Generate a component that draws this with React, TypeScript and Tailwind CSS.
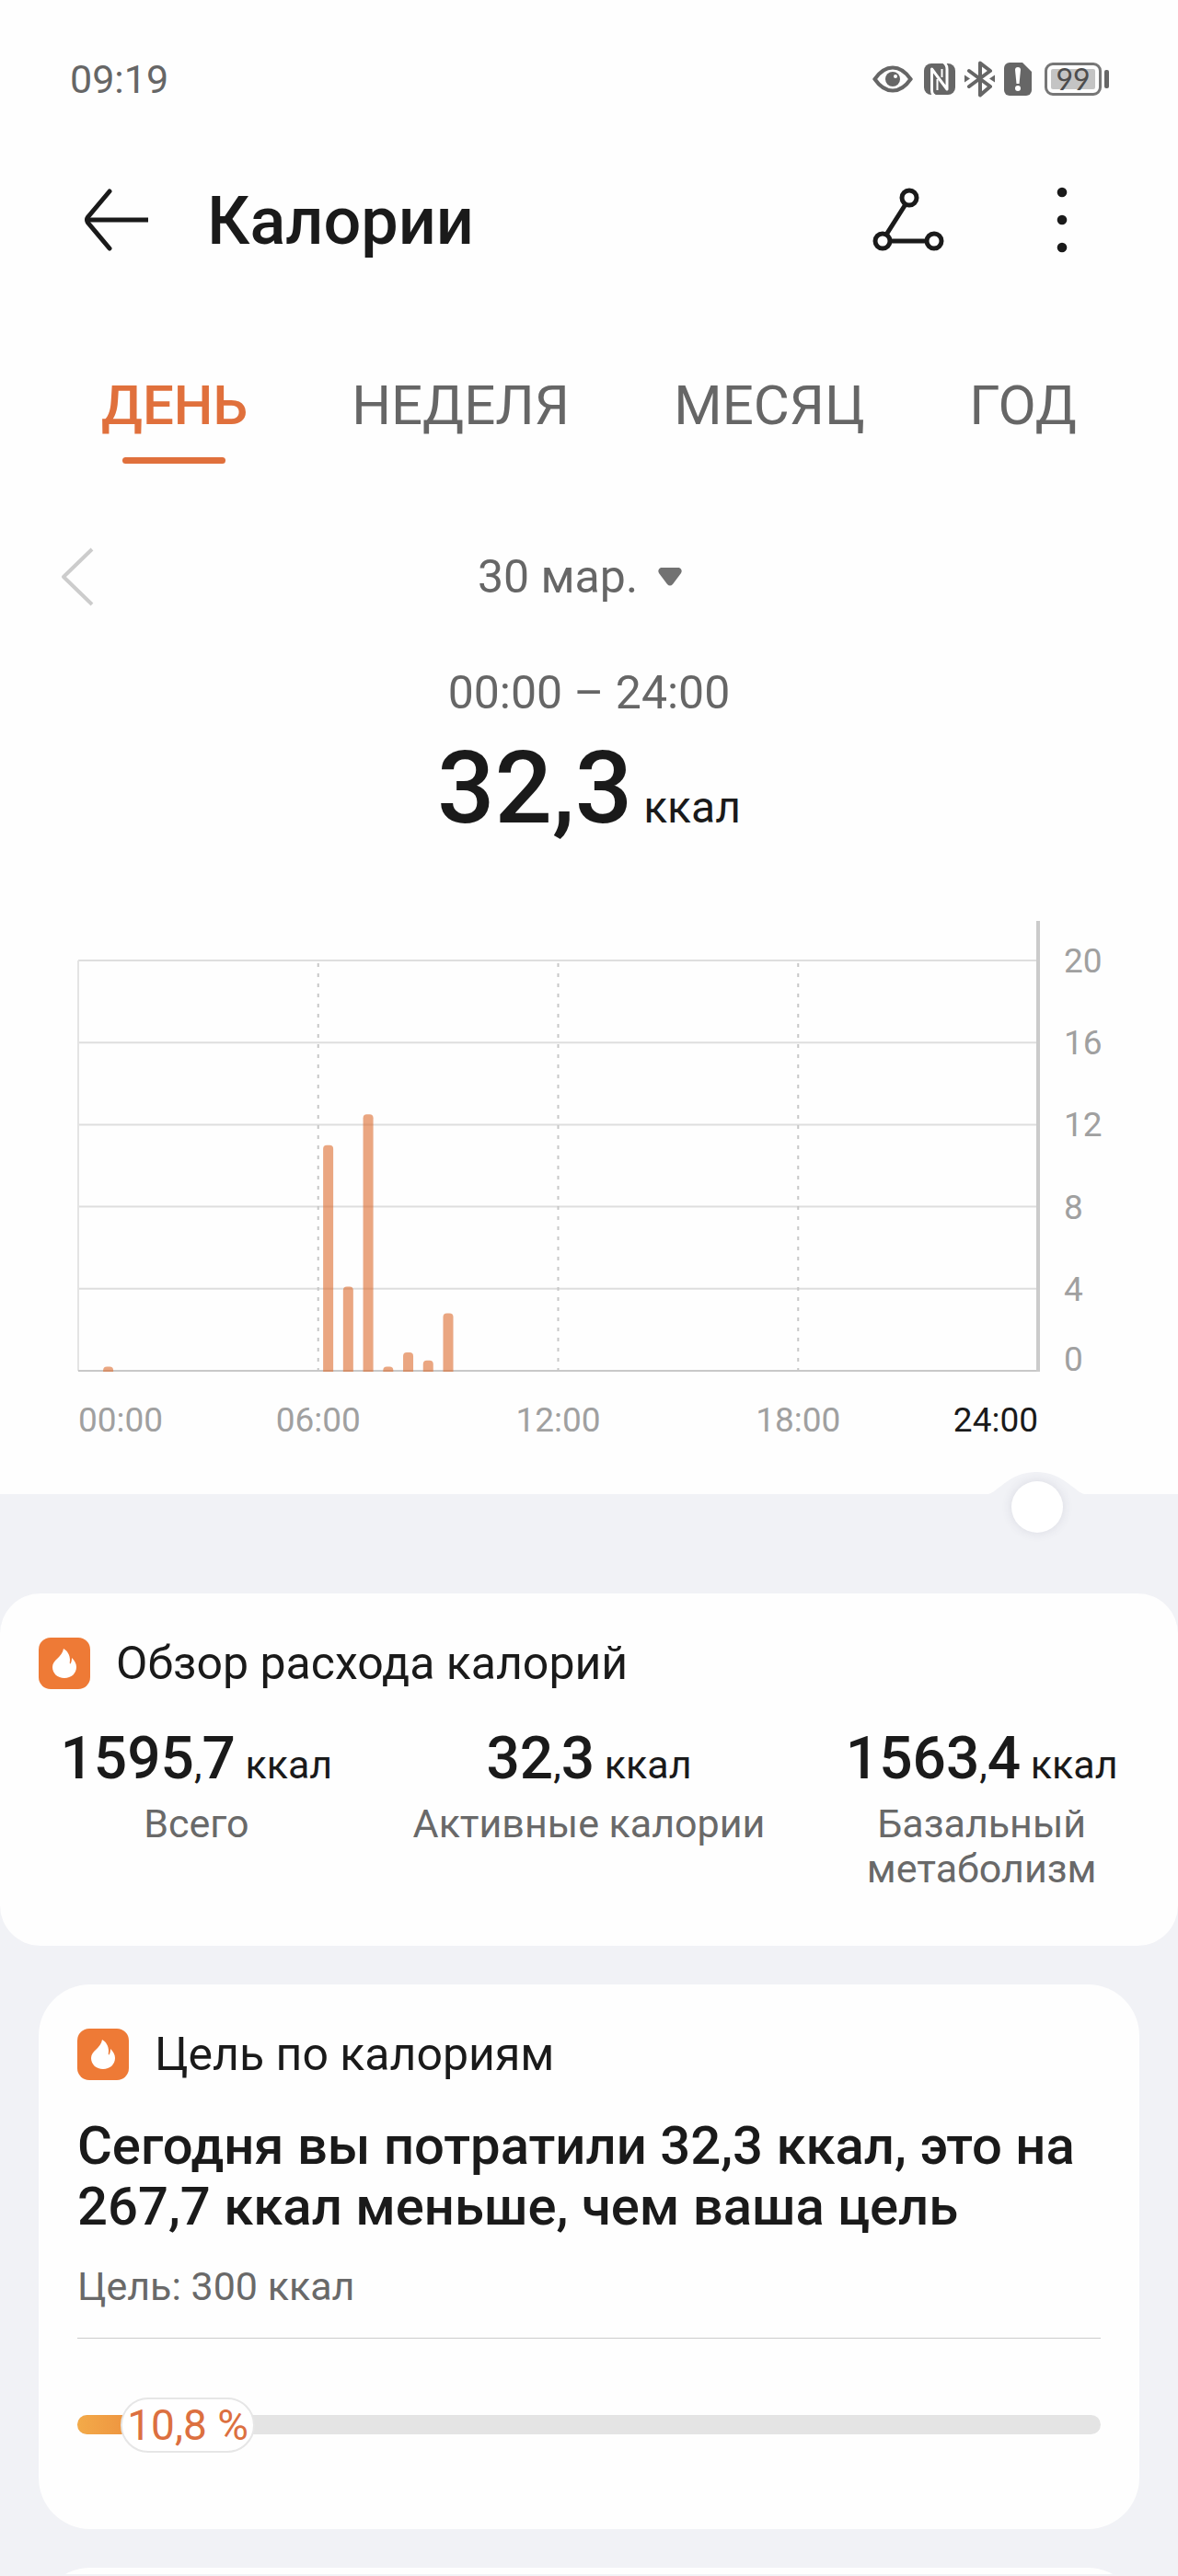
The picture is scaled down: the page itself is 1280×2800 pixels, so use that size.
import React, { useState } from "react";

const TABS = ["ДЕНЬ", "НЕДЕЛЯ", "МЕСЯЦ", "ГОД"];

// half-hour slots of the day that have a value, in kcal
const BARS = [
  { slot: 1, value: 0.2 },
  { slot: 12, value: 11 },
  { slot: 13, value: 4.1 },
  { slot: 14, value: 12.5 },
  { slot: 15, value: 0.2 },
  { slot: 16, value: 0.9 },
  { slot: 17, value: 0.5 },
  { slot: 18, value: 2.8 },
];

const CHART = { left: 85, right: 1128, top: 55, bottom: 501, max: 20 };

function StatusIcons() {
  return (
    <div className="flex items-center text-[#666]">
      <svg className="w-[44px] h-[30px]" viewBox="0 0 44 30" fill="none">
        <path d="M2.5 15C8 7 14 2.5 22 2.5S36 7 41.500 15C36 23 30 27.500 22 27.500S8 23 2.500 15z" stroke="currentColor" strokeWidth="4" />
        <circle cx="22" cy="15" r="8" fill="currentColor" />
        <circle cx="25" cy="12" r="2" fill="#fff" />
      </svg>
      <svg className="ml-3 w-[34px] h-[34px]" viewBox="0 0 34 34" fill="none">
        <rect width="34" height="34" rx="8" fill="currentColor" />
        <path d="M12 35c-3-1-3.500-3-3.500-6V6l16.500 22V6c0-3-.5-5-3.500-7" stroke="#fff" strokeWidth="3" strokeLinejoin="round" />
        <path d="M14.500 17v12" stroke="#fff" strokeWidth="2" />
        <path d="M19.500 6v9" stroke="#fff" strokeWidth="2" />
      </svg>
      <svg className="ml-[10px] w-[33px] h-[40px]" viewBox="0 0 33 40" fill="none">
        <path d="M5 11l23 17-11 9.500V2.500L28 11 5 28" stroke="currentColor" strokeWidth="4" strokeLinecap="round" strokeLinejoin="round" />
        <path d="M0 15.500l6 4-6 4zM33 15.500l-6 4 6 4z" fill="currentColor" />
      </svg>
      <svg className="ml-[10px] w-[30px] h-[36px]" viewBox="0 0 30 36">
        <path d="M6 0h14l10 10v20a6 6 0 0 1-6 6H6a6 6 0 0 1-6-6V6a6 6 0 0 1 6-6z" fill="currentColor" />
        <path d="M12 8a3 3 0 0 1 6 0l-1.500 15h-3z" fill="#fff" />
        <circle cx="15" cy="28" r="3" fill="#fff" />
      </svg>
      <div className="ml-[14px] w-[62px] h-[36px] rounded-[9px] border-[3px] border-[#767676] p-1">
        <div className="flex h-full items-center justify-center rounded-xs bg-[#c4c4c4] font-['Lato'] text-[32px] leading-none text-[#4d4d4d]">
          99
        </div>
      </div>
      <div className="ml-[3px] w-[5px] h-[20px] rounded-xs bg-[#666]" />
    </div>
  );
}

function FlameIcon() {
  return (
    <svg className="w-14 h-14 shrink-0" viewBox="0 0 56 56">
      <rect width="56" height="56" rx="13" fill="#ee7a36" />
      <path
        d="M27 12c4 2 7 7 7 12 0 2-.5 4 0 4.500 1 0 2-2.500 2-6.500 3 3 5 6 5 10 0 7-5.500 12-13 12s-13-5-13-12c0-8 11-11 12-20z"
        fill="#fff"
      />
    </svg>
  );
}

function CardTitle({ children }: { children: React.ReactNode }) {
  return (
    <div className="flex items-center gap-7">
      <FlameIcon />
      <h2 className="text-[50px] leading-14 text-[#1a1a1a]">{children}</h2>
    </div>
  );
}

function Chart() {
  const { left, right, top, bottom, max } = CHART;
  const yOf = (v: number) => bottom - ((bottom - top) * v) / max;
  const xOf = (hour: number) => left + ((right - left) * hour) / 24;

  return (
    <svg className="block w-full" viewBox="0 0 1280 635" fontSize="37">
      {[4, 8, 12, 16, 20].map((v) => (
        <line key={v} x1={left} x2={right} y1={yOf(v)} y2={yOf(v)} stroke="#dedede" strokeWidth="2" />
      ))}
      <line x1={left} x2={left} y1={top} y2={bottom} stroke="#e4e4e4" strokeWidth="2" />
      {[6, 12, 18].map((h) => (
        <line key={h} x1={xOf(h)} x2={xOf(h)} y1={top + 3} y2={bottom} stroke="#c8c8c8" strokeWidth="2" strokeDasharray="4 7" />
      ))}
      <line x1={left} x2={right} y1={bottom} y2={bottom} stroke="#c8c8c8" strokeWidth="2" />
      {BARS.map(({ slot, value }) => {
        const x = xOf(slot / 2 + 0.25) - 5.5;
        const y = yOf(value);
        const r = Math.min(4, bottom - y);
        return (
          <path
            key={slot}
            d={`M${x} ${bottom + 1}V${y + r}q0 ${-r} ${r} ${-r}h${11 - 2 * r}q${r} 0 ${r} ${r}V${bottom + 1}z`}
            fill="#dc6a2d"
            fillOpacity="0.6"
          />
        );
      })}
      <line x1={right} x2={right} y1="12" y2={bottom + 1} stroke="#cbcbcb" strokeWidth="4" />

      {[4, 8, 12, 16, 20].map((v) => (
        <text key={v} x="1156" y={yOf(v) + 13} fill="#a0a0a0">{v}</text>
      ))}
      <text x="1156" y={bottom} fill="#a0a0a0">0</text>

      <text x={left} y="567" fill="#a0a0a0">00:00</text>
      <text x={xOf(6)} y="567" fill="#a0a0a0" textAnchor="middle">06:00</text>
      <text x={xOf(12)} y="567" fill="#a0a0a0" textAnchor="middle">12:00</text>
      <text x={xOf(18)} y="567" fill="#a0a0a0" textAnchor="middle">18:00</text>
      <text x={right} y="567" fill="#1a1a1a" textAnchor="end">24:00</text>
    </svg>
  );
}

function TimeSlider() {
  return (
    <div className="relative h-[108px]">
      <svg className="absolute -top-6 right-[98px] w-[112px] h-[25px]" viewBox="0 0 112 25">
        <path d="M0 25c8-1 12-6 18-10C30 5 42 0 56 0s26 5 38 15c6 4 10 9 18 10z" fill="#f1f2f6" />
      </svg>
      <input
        type="range"
        min={0}
        max={48}
        defaultValue={48}
        aria-label="Время"
        className="absolute -top-4 left-[57px] h-[60px] w-[calc(100%-182px)] appearance-none bg-transparent [&::-webkit-slider-thumb]:h-14 [&::-webkit-slider-thumb]:w-14 [&::-webkit-slider-thumb]:appearance-none [&::-webkit-slider-thumb]:rounded-full [&::-webkit-slider-thumb]:bg-white [&::-webkit-slider-thumb]:shadow-[0_0_12px_rgba(60,60,90,0.12)]"
      />
    </div>
  );
}

function Stat({ whole, fraction, label }: { whole: string; fraction: string; label: string }) {
  return (
    <div className="flex flex-col items-center px-5 text-center text-[43px]">
      <p className="whitespace-nowrap leading-[72px] text-[#1a1a1a]">
        <span className="text-[64px] font-medium">{whole}</span>
        ,
        <span className="text-[64px] font-medium">{fraction}</span>
        {" "}ккал
      </p>
      <p className="mt-1 leading-[49px] text-[#696969]">{label}</p>
    </div>
  );
}

function GoalProgress({ percent, label }: { percent: number; label: string }) {
  return (
    <div
      className="relative mt-[83px] h-[21px] rounded-full bg-[#e4e4e4]"
      role="progressbar"
      aria-label="Цель по калориям"
      aria-valuenow={percent}
    >
      <div
        className="h-full rounded-full bg-linear-to-r from-[#f3aa49] to-[#e67a35]"
        style={{ width: `${percent}%` }}
      />
      <span
        className="absolute top-1/2 flex h-[60px] w-[146px] -translate-x-1/2 -translate-y-1/2 items-center justify-center whitespace-nowrap rounded-full border-2 border-[#e6e6e6] bg-white text-[46px] leading-none text-[#dc7040]"
        style={{ left: `${percent}%` }}
      >
        {label}
      </span>
    </div>
  );
}

export default function App() {
  const [tab, setTab] = useState(TABS[0]);

  return (
    <div className="min-h-screen bg-[#f1f2f6] font-['Roboto','Noto_Sans',sans-serif] text-[#1a1a1a]">
      <div className="bg-[#fefefe]">
        <div className="flex h-[110px] items-end justify-between pl-[76px] pr-[75px]">
          <span className="text-[43px] leading-12 text-[#666]">09:19</span>
          <div className="flex h-12 items-center">
            <StatusIcons />
          </div>
        </div>

        <header className="mt-[81px] flex h-24 items-center pl-[91px] pr-[114px]">
          <button type="button" aria-label="Назад">
            <svg className="block w-[72px] h-[68px]" viewBox="0 0 72 68" fill="none" stroke="#1a1a1a" strokeWidth="5">
              <path d="M28 3L4.500 31q-2 3 0 6L28 65" strokeLinecap="round" />
              <path d="M4 34h66" />
            </svg>
          </button>
          <h1 className="ml-[62px] grow pt-1 text-[72px] font-medium leading-24">Калории</h1>
          <button type="button" aria-label="Маршрут">
            <svg className="block w-[80px] h-[72px]" viewBox="0 0 80 72" fill="none" stroke="#1a1a1a" strokeWidth="5">
              <circle cx="41" cy="12" r="8" />
              <circle cx="12" cy="59" r="8" />
              <circle cx="68" cy="59" r="8" />
              <path d="M37 19L16 52M20 59h40" />
            </svg>
          </button>
          <button type="button" aria-label="Ещё" className="ml-[115px]">
            <svg className="block w-[24px] h-[72px]" viewBox="0 0 24 72" fill="#1a1a1a">
              <circle cx="12" cy="6" r="5.300" />
              <circle cx="12" cy="36" r="5.300" />
              <circle cx="12" cy="66" r="5.300" />
            </svg>
          </button>
        </header>

        <nav className="mt-[122px] flex justify-between px-[110px]" role="tablist">
          {TABS.map((name) => {
            const active = name === tab;
            return (
              <button
                key={name}
                type="button"
                role="tab"
                aria-selected={active}
                onClick={() => setTab(name)}
                className={`flex flex-col items-center text-[60px] leading-16 ${active ? "font-medium text-[#e0703c]" : "text-[#666]"}`}
              >
                {name}
                <span className={`mt-6 h-[7px] w-[112px] rounded-full ${active ? "bg-[#e0703c]" : ""}`} />
              </button>
            );
          })}
        </nav>

        <div className="mt-[91px] flex h-16 items-center px-[66px]">
          <button type="button" aria-label="Предыдущий день">
            <svg className="block w-[36px] h-[64px]" viewBox="0 0 36 64" fill="none" stroke="#ccc" strokeWidth="4">
              <path d="M34 2L3 32l31 30" strokeLinejoin="round" />
            </svg>
          </button>
          <button type="button" className="mx-auto flex items-center gap-[22px] text-[50px] leading-16 text-[#666]">
            30 мар.
            <svg className="w-[26px] h-[20px]" viewBox="0 0 26 20" fill="#727272">
              <path d="M3 0h20q4 2 2 6L16 18q-3 3-6 0L1 6Q-1 2 3 0z" />
            </svg>
          </button>
          <span className="w-[56px]" />
        </div>

        <p className="mt-[62px] text-center text-[50px] leading-16 text-[#666]">00:00 – 24:00</p>
        <p className="mt-4 text-center text-[48px] leading-[112px]">
          <span className="text-[110px] font-medium">32,3</span> ккал
        </p>
        <div className="mt-[55px]">
          <Chart />
        </div>
      </div>

      <TimeSlider />

      <section className="rounded-[44px] bg-[#fefefe] px-[42px] pb-[59px] pt-12">
        <CardTitle>Обзор расхода калорий</CardTitle>
        <div className="-mx-[42px] mt-10 grid grid-cols-3">
          <Stat whole="1595" fraction="7" label="Всего" />
          <Stat whole="32" fraction="3" label="Активные калории" />
          <Stat whole="1563" fraction="4" label="Базальный метаболизм" />
        </div>
      </section>

      <section className="mx-[42px] mt-[42px] rounded-[56px] bg-[#fefefe] px-[42px] pb-[103px] pt-12">
        <CardTitle>Цель по калориям</CardTitle>
        <p className="mt-[38px] text-[58px] font-medium leading-[66px]">
          Сегодня вы потратили 32,3 ккал, это на 267,7 ккал меньше, чем ваша цель
        </p>
        <p className="mt-[26px] border-b border-[#ccc] pb-7 text-[43px] leading-14 text-[#696969]">Цель: 300 ккал</p>
        <GoalProgress percent={10.8} label="10,8 %" />
      </section>

      {/* top edge of the next card */}
      <div className="mx-[42px] mt-[42px] h-[7px] overflow-hidden">
        <div className="h-32 rounded-[56px] bg-[#fefefe]" />
      </div>
    </div>
  );
}
